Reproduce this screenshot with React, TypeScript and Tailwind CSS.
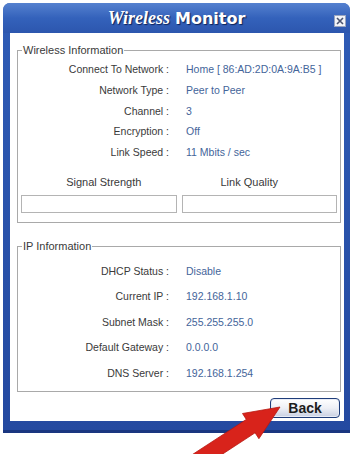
import React from 'react';

const wirelessRows = [
  ['Connect To Network :', 'Home [ 86:AD:2D:0A:9A:B5 ]'],
  ['Network Type :', 'Peer to Peer'],
  ['Channel :', '3'],
  ['Encryption :', 'Off'],
  ['Link Speed :', '11 Mbits / sec'],
];

const ipRows = [
  ['DHCP Status :', 'Disable'],
  ['Current IP :', '192.168.1.10'],
  ['Subnet Mask :', '255.255.255.0'],
  ['Default Gateway :', '0.0.0.0'],
  ['DNS Server :', '192.168.1.254'],
];

function InfoRow({ label, value, height }: { label: string; value: string; height: string }) {
  return (
    <div className={`flex items-center ${height}`}>
      <div className="w-[148px] text-right text-[#3a3a3a]">{label}</div>
      <div className="ml-[17px] text-[#44659a]">{value}</div>
    </div>
  );
}

export default function App() {
  return (
    <div
      className="relative w-[351px] h-[454px] bg-white overflow-hidden pl-[3px] pt-[3px]"
      style={{ fontFamily: '"Liberation Sans", Arial, sans-serif' }}
    >
      {/* Window */}
      <div className="w-[347px] h-[430px] flex flex-col rounded-t-[7px] bg-gradient-to-b from-[#2f5cb6] to-[#2449a0] shadow-[inset_0_-3px_0_#1a3680]">
        {/* Title bar */}
        <div className="relative h-[30px] flex items-center justify-center rounded-t-[7px] bg-gradient-to-b from-[#5581cf] via-[#3462bb] to-[#2c56ae]">
          <div className="flex items-baseline gap-[5px] text-white [text-shadow:1px_1px_1px_#0d2258]">
            <span
              className="text-[18px] font-bold italic"
              style={{ fontFamily: '"Liberation Serif", "Times New Roman", serif' }}
            >
              Wireless
            </span>
            <span
              className="text-[16px] font-bold"
              style={{ fontFamily: '"DejaVu Sans", Verdana, sans-serif' }}
            >
              Monitor
            </span>
          </div>
          <div className="absolute right-[4px] top-[12px] w-[12px] h-[12px] bg-[#f2f4f8] border border-[#9aa6c0] flex items-center justify-center">
            <svg width="8" height="8" viewBox="0 0 8 8">
              <path d="M1 1L7 7M7 1L1 7" stroke="#4a5470" strokeWidth="1.6" />
            </svg>
          </div>
        </div>

        {/* Client area */}
        <div className="ml-[7px] mr-[6px] h-[388px] bg-white text-[10.5px] pt-[11px] px-[7px] pr-[3px] flex flex-col">
          <fieldset className="border border-[#a9a9a9] h-[179px] px-[3px]">
            <legend className="ml-[1px] px-[1px] text-[#3a3a3a] text-[11px] leading-[12px]">
              Wireless Information
            </legend>
            <div className="pt-[4px]">
              {wirelessRows.map(([l, v]) => (
                <InfoRow key={l} label={l} value={v} height="h-[20.6px]" />
              ))}
            </div>
            <div className="flex gap-[5px] mt-[11px] text-[#3a3a3a]">
              <div className="flex-1 flex flex-col items-center">
                <span className="text-[11px] pl-[10px]">Signal Strength</span>
                <div className="mt-[5px] w-full h-[18px] border border-[#b4b4b4]" />
              </div>
              <div className="flex-1 flex flex-col items-center">
                <span className="text-[11px] pr-[20px]">Link Quality</span>
                <div className="mt-[5px] w-full h-[18px] border border-[#b4b4b4]" />
              </div>
            </div>
          </fieldset>

          <fieldset className="mt-[17px] border border-[#a9a9a9] h-[152px] px-[3px]">
            <legend className="ml-[1px] px-[1px] text-[#3a3a3a] text-[11px] leading-[12px]">
              IP Information
            </legend>
            <div className="pt-[7px]">
              {ipRows.map(([l, v]) => (
                <InfoRow key={l} label={l} value={v} height="h-[25.5px]" />
              ))}
            </div>
          </fieldset>

          <div className="flex justify-end mt-[6px] pr-[1px]">
            <button className="w-[70px] h-[20px] rounded-[4px] border border-[#1f3d7a] bg-gradient-to-b from-[#ffffff] via-[#eef0f6] to-[#c9d0e2] text-[14px] font-bold text-[#1c1c1c] shadow-[inset_0_0_0_1px_#e8ecf6] leading-none">
              Back
            </button>
          </div>
        </div>
      </div>

      {/* Red pointer arrow */}
      <svg className="absolute left-0 top-0 pointer-events-none" width="351" height="454" viewBox="0 0 351 454">
        <polygon
          points="280,407 242.5,413.5 246.3,419.4 187.7,457.6 196.5,471.1 255.1,432.8 258.9,438.7"
          fill="#d8231b"
          stroke="#b81810"
          strokeWidth="0.8"
        />
      </svg>
    </div>
  );
}
